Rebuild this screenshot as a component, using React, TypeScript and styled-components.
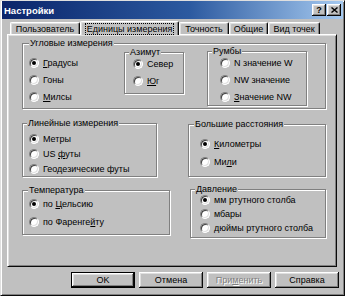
import React from 'react';
import styled, { createGlobalStyle, css } from 'styled-components';

const Global = createGlobalStyle`
  html, body {
    margin: 0;
    padding: 0;
    background: #c0c0c0;
  }
  body {
    font-family: 'Liberation Sans', Arial, sans-serif;
    font-size: 9px;
    color: #000;
  }
`;

const Window = styled.div`
  box-sizing: border-box;
  width: 345px;
  height: 296px;
  background: #c0c0c0;
  border: 1px solid;
  border-color: #dfdfdf #0a0a0a #0a0a0a #dfdfdf;
  box-shadow: inset 1px 1px 0 #fff, inset -1px -1px 0 #808080;
  padding: 0 1px;
  display: flex;
  flex-direction: column;
`;

const TitleBar = styled.div`
  height: 18px;
  background: linear-gradient(90deg, #0a246a 0%, #2c5aa0 55%, #a6caf0 100%);
  display: flex;
  align-items: center;
  justify-content: space-between;
  padding: 0 2px;
`;

const TitleText = styled.span`
  color: #fff;
  font-weight: bold;
  font-size: 9.5px;
`;

const CaptionButtons = styled.div`
  display: flex;
  gap: 1px;
`;

const CaptionButton = styled.div`
  box-sizing: border-box;
  width: 14px;
  height: 12px;
  background: #c0c0c0;
  box-shadow: inset -1px -1px 0 #0a0a0a, inset 1px 1px 0 #fff, inset -2px -2px 0 #808080,
    inset 2px 2px 0 #dfdfdf;
  display: flex;
  align-items: center;
  justify-content: center;
  font-weight: bold;
  font-size: 9px;
  line-height: 1;
`;

const Body = styled.div`
  display: flex;
  flex-direction: column;
  padding: 0 4px 0 5px;
`;

const TabStrip = styled.div`
  display: flex;
  align-items: flex-end;
  height: 15px;
  padding-left: 3px;
`;

const Tab = styled.div<{ $w: number; $active?: boolean }>`
  box-sizing: border-box;
  width: ${(p) => p.$w}px;
  height: ${(p) => (p.$active ? 14 : 12)}px;
  margin-bottom: ${(p) => (p.$active ? -1 : 0)}px;
  background: #c0c0c0;
  border-top: 1px solid #fff;
  border-left: 1px solid #fff;
  border-right: 1px solid #0a0a0a;
  box-shadow: inset -1px 0 0 #808080, inset 1px 1px 0 #dfdfdf;
  border-radius: 2px 2px 0 0;
  display: flex;
  align-items: center;
  justify-content: center;
  position: relative;
  z-index: ${(p) => (p.$active ? 2 : 1)};
  white-space: nowrap;
`;

const TabLabel = styled.span<{ $focus?: boolean }>`
  line-height: 10px;
  padding: 0 1px;
  ${(p) =>
    p.$focus &&
    css`
      outline: 1px dotted #000;
    `}
`;

const Panel = styled.div`
  box-sizing: border-box;
  width: 330px;
  height: 233px;
  border: 1px solid;
  border-color: #fff #0a0a0a #0a0a0a #fff;
  box-shadow: inset 1px 1px 0 #dfdfdf, inset -1px -1px 0 #808080;
  padding: 8px 0 0 14px;
  display: flex;
  flex-direction: column;
`;

const Row = styled.div<{ $top?: number; $gap: number }>`
  display: flex;
  align-items: flex-start;
  gap: ${(p) => p.$gap}px;
  margin-top: ${(p) => p.$top ?? 0}px;
`;

const Group = styled.div<{ $w: number; $h: number; $top?: number; $left?: number }>`
  box-sizing: border-box;
  width: ${(p) => p.$w}px;
  height: ${(p) => p.$h}px;
  margin-top: ${(p) => p.$top ?? 0}px;
  margin-left: ${(p) => p.$left ?? 0}px;
  border: 1px solid #808080;
  box-shadow: inset 1px 1px 0 #fff, 1px 1px 0 #fff;
  flex-shrink: 0;
`;

const Caption = styled.div<{ $x: number }>`
  width: fit-content;
  height: 11px;
  line-height: 11px;
  margin: -6px 0 0 ${(p) => p.$x}px;
  padding: 0 1px;
  background: #c0c0c0;
  white-space: nowrap;
`;

const GroupBody = styled.div<{ $t: number; $l: number }>`
  margin-top: ${(p) => p.$t}px;
  padding-left: ${(p) => p.$l}px;
`;

const Column = styled.div<{ $w: number; $top: number }>`
  width: ${(p) => p.$w}px;
  margin-top: ${(p) => p.$top}px;
  flex-shrink: 0;
`;

const RadioRow = styled.div<{ $h: number }>`
  display: flex;
  align-items: center;
  gap: 4px;
  height: ${(p) => p.$h}px;
  white-space: nowrap;
`;

const RadioDot = styled.span<{ $on?: boolean }>`
  box-sizing: border-box;
  width: 10px;
  height: 10px;
  border-radius: 50%;
  background: #fff;
  border: 1px solid;
  border-color: #808080 #fff #fff #808080;
  box-shadow: inset 1px 1px 0 #404040, inset -1px -1px 0 #dfdfdf;
  position: relative;
  flex-shrink: 0;
  ${(p) =>
    p.$on &&
    css`
      &::after {
        content: '';
        position: absolute;
        left: 2px;
        top: 2px;
        width: 4px;
        height: 4px;
        border-radius: 50%;
        background: #000;
      }
    `}
`;

const ButtonRow = styled.div`
  display: flex;
  justify-content: flex-end;
  gap: 4px;
  margin-top: 5px;
`;

const Button = styled.div<{ $primary?: boolean; $disabled?: boolean }>`
  box-sizing: border-box;
  width: 64px;
  height: 16px;
  background: #c0c0c0;
  display: flex;
  align-items: center;
  justify-content: center;
  box-shadow: inset -1px -1px 0 #0a0a0a, inset 1px 1px 0 #fff, inset -2px -2px 0 #808080,
    inset 2px 2px 0 #dfdfdf;
  ${(p) =>
    p.$primary &&
    css`
      border: 1px solid #000;
    `}
  ${(p) =>
    p.$disabled &&
    css`
      color: #808080;
      text-shadow: 1px 1px 0 #fff;
    `}
`;

type Opt = { label: React.ReactNode; on?: boolean };

function Radios({ items, h }: { items: Opt[]; h: number }) {
  return (
    <>
      {items.map((it, i) => (
        <RadioRow key={i} $h={h}>
          <RadioDot $on={it.on} />
          <span>{it.label}</span>
        </RadioRow>
      ))}
    </>
  );
}

export default function App() {
  return (
    <>
      <Global />
      <Window>
        <TitleBar>
          <TitleText>Настройки</TitleText>
          <CaptionButtons>
            <CaptionButton>?</CaptionButton>
            <CaptionButton>
              <svg width="7" height="6" viewBox="0 0 7 6">
                <path d="M0.5 0.5 L6.5 5.5 M6.5 0.5 L0.5 5.5" stroke="#000" strokeWidth="1.4" />
              </svg>
            </CaptionButton>
          </CaptionButtons>
        </TitleBar>
        <Body>
          <TabStrip>
            <Tab $w={70}>
              <TabLabel>Пользователь</TabLabel>
            </Tab>
            <Tab $w={99} $active>
              <TabLabel $focus>Единицы измерения</TabLabel>
            </Tab>
            <Tab $w={50}>
              <TabLabel>Точность</TabLabel>
            </Tab>
            <Tab $w={39}>
              <TabLabel>Общие</TabLabel>
            </Tab>
            <Tab $w={52}>
              <TabLabel>Вид точек</TabLabel>
            </Tab>
          </TabStrip>
          <Panel>
            <Group $w={304} $h={66}>
              <Caption $x={6}>Угловые измерения</Caption>
              <GroupBody $t={0} $l={6}>
                <Row $gap={0}>
                  <Column $w={95} $top={5}>
                    <Radios
                      h={17}
                      items={[
                        { label: <><u>Г</u>радусы</>, on: true },
                        { label: 'Гоны' },
                        { label: <><u>М</u>илсы</> },
                      ]}
                    />
                  </Column>
                  <Group $w={60} $h={42} $top={3}>
                    <Caption $x={4}>Азимут</Caption>
                    <GroupBody $t={-3} $l={8}>
                      <Radios
                        h={17}
                        items={[{ label: 'Север', on: true }, { label: <><u>Ю</u>г</> }]}
                      />
                    </GroupBody>
                  </Group>
                  <Group $w={100} $h={55} $top={2} $left={23}>
                    <Caption $x={4}>Румбы</Caption>
                    <GroupBody $t={-3} $l={12}>
                      <Radios
                        h={17}
                        items={[
                          { label: 'N значение W' },
                          { label: 'NW значение' },
                          { label: <><u>З</u>начение NW</> },
                        ]}
                      />
                    </GroupBody>
                  </Group>
                </Row>
              </GroupBody>
            </Group>

            <Row $top={14} $gap={31}>
              <Group $w={135} $h={54}>
                <Caption $x={4}>Линейные измерения</Caption>
                <GroupBody $t={2} $l={6}>
                  <Radios
                    h={15}
                    items={[
                      { label: 'Метры', on: true },
                      { label: <>US <u>ф</u>уты</> },
                      { label: 'Геодезические футы' },
                    ]}
                  />
                </GroupBody>
              </Group>
              <Group $w={138} $h={53} $top={1}>
                <Caption $x={5}>Большие расстояния</Caption>
                <GroupBody $t={5} $l={11}>
                  <Radios
                    h={18}
                    items={[
                      { label: <><u>К</u>илометры</>, on: true },
                      { label: <>Ми<u>л</u>и</> },
                    ]}
                  />
                </GroupBody>
              </Group>
            </Row>

            <Row $top={12} $gap={20}>
              <Group $w={148} $h={45} $top={1}>
                <Caption $x={5}>Температура</Caption>
                <GroupBody $t={-1} $l={6}>
                  <Radios
                    h={18}
                    items={[
                      { label: <>по <u>Ц</u>ельсию</>, on: true },
                      { label: <>по Фаренге<u>й</u>ту</> },
                    ]}
                  />
                </GroupBody>
              </Group>
              <Group $w={136} $h={49}>
                <Caption $x={4}>Давление</Caption>
                <GroupBody $t={-2} $l={9}>
                  <Radios
                    h={14}
                    items={[
                      { label: 'мм ртутного столба', on: true },
                      { label: 'мбары' },
                      { label: 'дюймы ртутного столба' },
                    ]}
                  />
                </GroupBody>
              </Group>
            </Row>
          </Panel>
          <ButtonRow>
            <Button $primary>OK</Button>
            <Button>Отмена</Button>
            <Button $disabled>
              <span>
                При<u>м</u>енить
              </span>
            </Button>
            <Button>Справка</Button>
          </ButtonRow>
        </Body>
      </Window>
    </>
  );
}
